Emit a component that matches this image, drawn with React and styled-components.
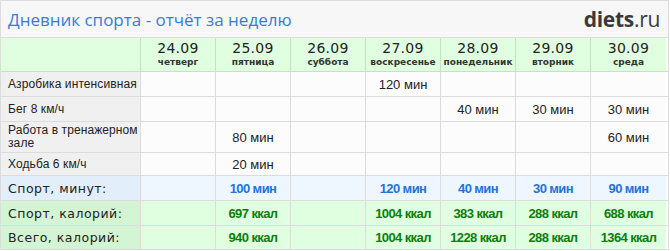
import styled, { createGlobalStyle } from "styled-components";

const GlobalStyle = createGlobalStyle`
    body {
        margin: 0;
        background: #fff;
    }
`;

const Report = styled.div`
    box-sizing: border-box;
    width: 669px;
    border: 1px solid #dcdcdc;
    font-family: "Liberation Sans", Arial, sans-serif;
    color: #222;
`;

const TitleBar = styled.div`
    display: flex;
    align-items: center;
    justify-content: space-between;
    height: 36px;
    padding: 0 8px 0 7px;
    background: #f7f7f7;
    border-bottom: 1px solid #dcdcdc;
`;

const Title = styled.h1`
    margin: 0;
    font-family: "Open Sans", sans-serif;
    font-size: 17px;
    font-weight: 400;
    color: #3b7ad9;
`;

const Logo = styled.div`
    font-family: "Open Sans", sans-serif;
    font-size: 21px;
    color: #3a3a3a;
    letter-spacing: -0.3px;
    b { font-weight: 700; }
`;

const Row = styled.div`
    display: grid;
    grid-template-columns: 140px repeat(7, 75px);
    height: ${p => p.$h}px;
    border-bottom: 1px solid ${p => p.$line || "#dcdcdc"};
    box-sizing: border-box;
    &:last-child { border-bottom: none; }
`;

const Cell = styled.div`
    box-sizing: border-box;
    display: flex;
    align-items: center;
    justify-content: center;
    border-right: 1px solid ${p => p.$line || "#dcdcdc"};
    background: ${p => p.$bg || "#fcfcfc"};
    font-size: 13px;
    color: #222;
    &:last-child { border-right: none; }
`;

const LabelCell = styled(Cell)`
    justify-content: flex-start;
    padding: 0 0 0 7px;
    background: ${p => p.$bg || "#f0f0f0"};
    font-size: 12px;
    letter-spacing: 0.1px;
    line-height: 13px;
    white-space: pre;
`;

const SumLabel = styled(LabelCell)`
    font-family: "DejaVu Sans", Verdana, sans-serif;
    font-size: 12.5px;
    letter-spacing: 0.5px;
`;

const DayCell = styled(Cell)`
    flex-direction: column;
    gap: 1px;
    background: #e0ffe0;
`;

const DayDate = styled.div`
    font-family: "DejaVu Sans", Verdana, sans-serif;
    font-size: 14px;
    line-height: 15px;
    letter-spacing: 0.3px;
`;

const DayName = styled.div`
    font-family: "DejaVu Sans", Verdana, sans-serif;
    font-size: 9px;
    font-weight: 700;
    line-height: 11px;
    color: #333;
`;

const Value = styled(Cell)`
    font-weight: 700;
    letter-spacing: -0.6px;
    color: ${p => p.$color};
`;

const days = [
    ["24.09", "четверг"],
    ["25.09", "пятница"],
    ["26.09", "суббота"],
    ["27.09", "воскресенье"],
    ["28.09", "понедельник"],
    ["29.09", "вторник"],
    ["30.09", "среда"],
];

const activities = [
    { name: "Азробика интенсивная", h: 25, v: ["", "", "", "120 мин", "", "", ""] },
    { name: "Бег 8 км/ч", h: 25, v: ["", "", "", "", "40 мин", "30 мин", "30 мин"] },
    { name: "Работа в тренажерном\nзале", h: 31, v: ["", "80 мин", "", "", "", "", "60 мин"] },
    { name: "Ходьба 6 км/ч", h: 23, v: ["", "20 мин", "", "", "", "", ""] },
];

const totals = [
    { name: "Спорт, минут:", h: 25, labelBg: "#e3eefb", bg: "#eef6ff", color: "#2272dc",
      v: ["", "100 мин", "", "120 мин", "40 мин", "30 мин", "90 мин"] },
    { name: "Спорт, калорий:", h: 25, labelBg: "#d3f5d3", bg: "#e0ffe0", color: "#0c7d0c",
      v: ["", "697 ккал", "", "1004 ккал", "383 ккал", "288 ккал", "688 ккал"] },
    { name: "Всего, калорий:", h: 23, labelBg: "#d3f5d3", bg: "#e0ffe0", color: "#0c7d0c",
      v: ["", "940 ккал", "", "1004 ккал", "1228 ккал", "288 ккал", "1364 ккал"] },
];

export default function App() {
    return (
        <>
            <GlobalStyle />
            <Report>
                <TitleBar>
                    <Title>Дневник спорта - отчёт за неделю</Title>
                    <Logo><b>diets</b>.ru</Logo>
                </TitleBar>
                <Row $h={34} $line="#bfe6bf">
                    <Cell $bg="#e0ffe0" $line="#bfe6bf" />
                    {days.map(([d, n]) => (
                        <DayCell key={d} $line="#bfe6bf">
                            <DayDate>{d}</DayDate>
                            <DayName>{n}</DayName>
                        </DayCell>
                    ))}
                </Row>
                {activities.map(a => (
                    <Row key={a.name} $h={a.h}>
                        <LabelCell>{a.name}</LabelCell>
                        {a.v.map((v, i) => <Cell key={i}>{v}</Cell>)}
                    </Row>
                ))}
                {totals.map(t => (
                    <Row key={t.name} $h={t.h}>
                        <SumLabel $bg={t.labelBg}>{t.name}</SumLabel>
                        {t.v.map((v, i) => <Value key={i} $bg={t.bg} $color={t.color}>{v}</Value>)}
                    </Row>
                ))}
            </Report>
        </>
    );
}
